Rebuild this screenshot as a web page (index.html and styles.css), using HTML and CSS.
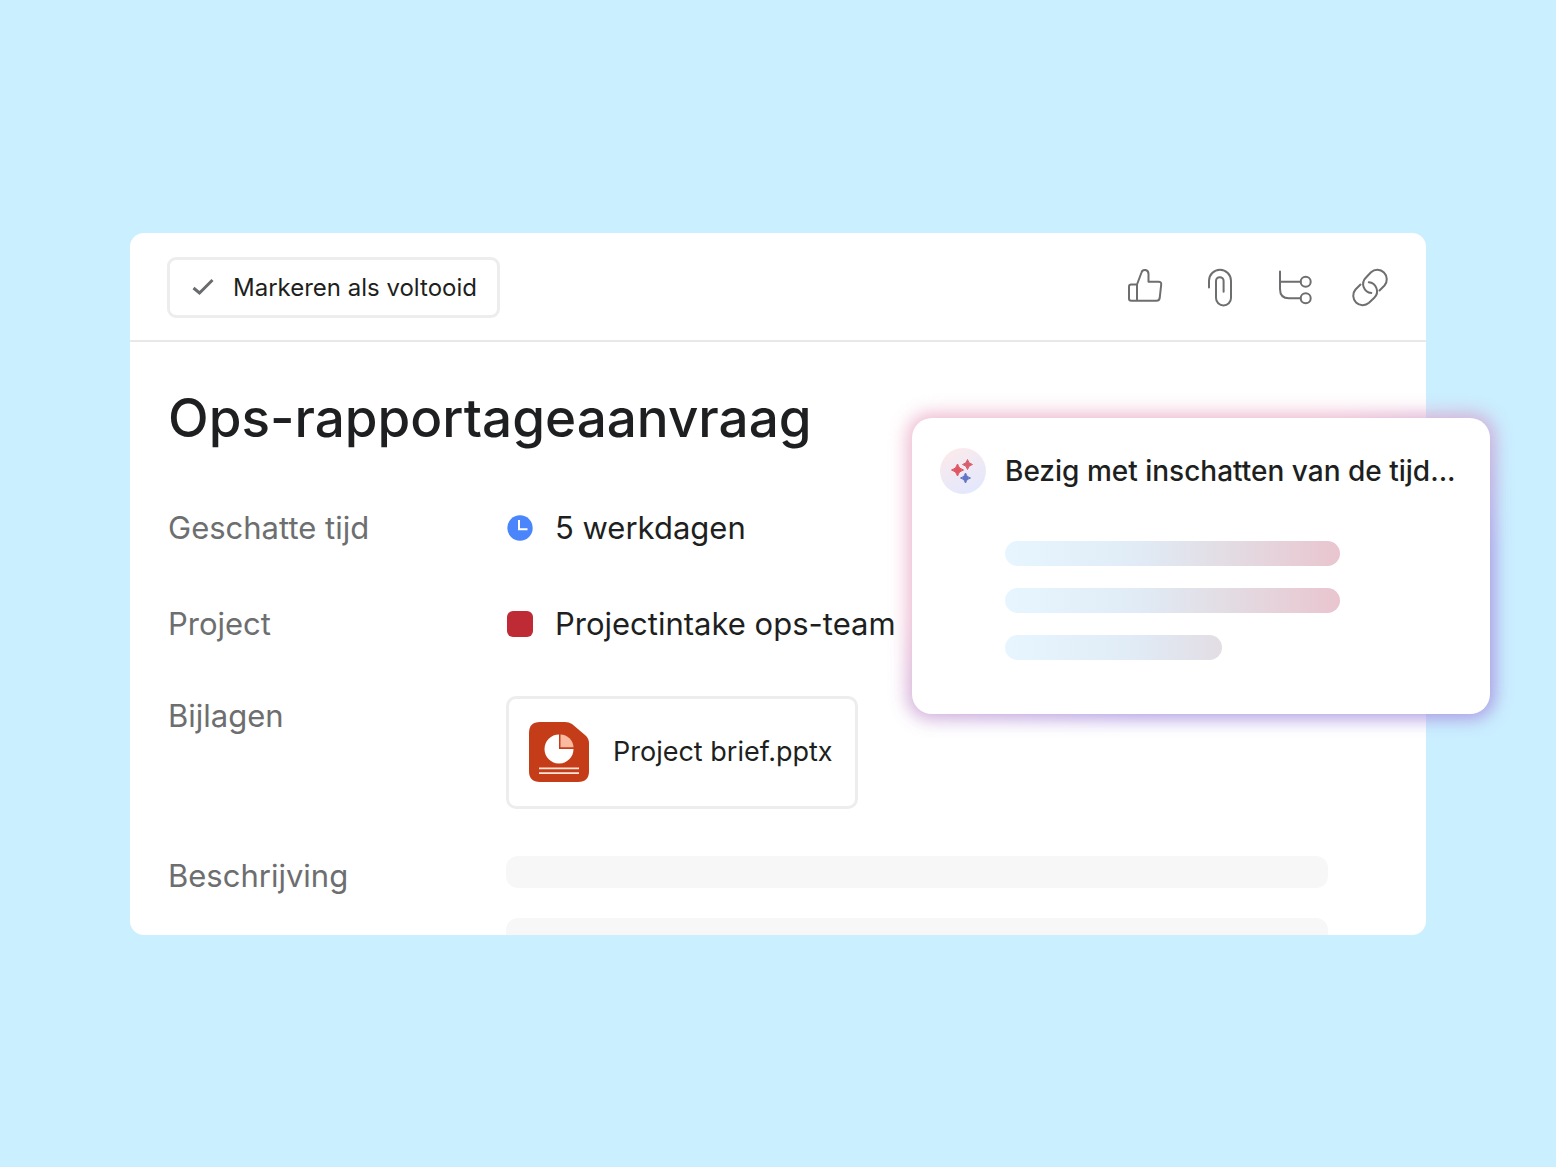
FILE: index.html
```html
<!DOCTYPE html>
<html lang="nl">
<head>
  <meta charset="UTF-8">
  <meta name="viewport" content="width=device-width, initial-scale=1.0">
  <title>Ops-rapportageaanvraag</title>
  <link rel="stylesheet" href="styles.css">
</head>
<body>
  <main class="stage">
    <section class="task">
      <header class="toolbar">
        <button type="button" class="complete-button">
          <svg class="check" viewBox="0 0 24 24"><path d="M3.500 13l6 5L22.500 5"/></svg>
          Markeren als voltooid
        </button>
        <div class="actions">
          <button type="button" class="icon-button" aria-label="Vind ik leuk">
            <svg viewBox="0 0 40 40">
              <path d="M12 17.500L16.500 5.500C17.500 1.800 23.500 2 23.500 7V14.700H33.500Q36.500 14.700 36.200 17.700L34.700 31Q34.300 33.700 31.500 33.700H6.200Q4 33.700 4 31.500V19.700Q4 17.500 6.200 17.500H12V33.700"/>
            </svg>
          </button>
          <button type="button" class="icon-button" aria-label="Bijlage toevoegen">
            <svg viewBox="0 0 40 40">
              <path d="M9 20.500V13.800A11 11 0 0 1 31 13.800V31A7.500 7.500 0 0 1 16 31V14A3.800 3.800 0 0 1 23.600 14V24.700"/>
            </svg>
          </button>
          <button type="button" class="icon-button" aria-label="Subtaken">
            <svg viewBox="0 0 40 40">
              <path d="M5 4.500V22Q5 31.300 14 31.300H25.500M5 14.800H25.500"/>
              <circle cx="30.700" cy="14.800" r="5"/>
              <circle cx="30.700" cy="31.300" r="5"/>
            </svg>
          </button>
          <button type="button" class="icon-button" aria-label="Link kopiëren">
            <svg viewBox="0 0 40 40">
              <path d="M29.500 23.500L34.500 18.500A9.500 9.500 0 0 0 21 5.200L15.800 10.700A9 9 0 0 0 21.300 26"/>
              <path d="M10.500 17.500L5.500 22.500A9.500 9.500 0 0 0 19 35.800L24.300 30.700A9 9 0 0 0 18.800 15.300"/>
            </svg>
          </button>
        </div>
      </header>

      <div class="content">
        <h1>Ops-rapportageaanvraag</h1>
        <dl class="fields">
          <div class="field">
            <dt>Geschatte tijd</dt>
            <dd class="value">
              <svg class="marker" viewBox="0 0 26 26">
                <circle cx="13" cy="13" r="12.700" fill="#4a85fb"/>
                <path d="M12 5V14.300H20.500" fill="none" stroke="#fff" stroke-width="2"/>
              </svg>
              5 werkdagen
            </dd>
          </div>
          <div class="field">
            <dt>Project</dt>
            <dd class="value"><span class="marker project-color"></span>Projectintake ops-team</dd>
          </div>
          <div class="field field-top">
            <dt>Bijlagen</dt>
            <dd>
              <a href="#" class="attachment">
                <svg class="file-icon" viewBox="0 0 60 60">
                  <path d="M11 0H36Q40 0 43 2L56 13Q60 16.500 60 21V49Q60 60 49 60H11Q0 60 0 49V11Q0 0 11 0Z" fill="#c43d18"/>
                  <path d="M30 12.500A14.500 14.500 0 1 0 44.500 27H30Z" fill="#fff"/>
                  <path d="M31.500 12.500A13.500 13.500 0 0 1 44.500 25.200H31.500Z" fill="#fbb9a0"/>
                  <path d="M10 46.300H50M10 51.200H50" stroke="#ffe4d8" stroke-width="1.800"/>
                </svg>
                Project brief.pptx
              </a>
            </dd>
          </div>
          <div class="field field-top">
            <dt>Beschrijving</dt>
            <dd class="description">
              <span class="text-line"></span>
              <span class="text-line"></span>
            </dd>
          </div>
        </dl>
      </div>
    </section>

    <aside class="ai-card">
      <div class="ai-panel">
        <svg class="ai-icon" viewBox="0 0 46 46">
          <defs>
            <linearGradient id="badge" x1="0" y1="0" x2="0.500" y2="1">
              <stop offset="0.200" stop-color="#f9eaed"/>
              <stop offset="1" stop-color="#e4e8fc"/>
            </linearGradient>
          </defs>
          <circle cx="23" cy="23" r="23" fill="url(#badge)"/>
          <path d="M17.500 16Q18.500 21 23.500 22Q18.500 23 17.500 28Q16.500 23 11.500 22Q16.500 21 17.500 16Z" fill="#e05562" stroke="#e05562"/>
          <path d="M27.500 11.500Q28.300 15.700 32.500 16.500Q28.300 17.300 27.500 21.500Q26.700 17.300 22.500 16.500Q26.700 15.700 27.500 11.500Z" fill="#d95d6c" stroke="#d95d6c"/>
          <path d="M25.500 25Q26.300 29.200 30.500 30Q26.300 30.800 25.500 35Q24.700 30.800 20.500 30Q24.700 29.200 25.500 25Z" fill="#6274c6" stroke="#6274c6"/>
        </svg>
        <p class="ai-title">Bezig met inschatten van de tijd...</p>
        <div class="ai-lines">
          <span class="ai-line"></span>
          <span class="ai-line"></span>
          <span class="ai-line ai-line-short"></span>
        </div>
      </div>
    </aside>
  </main>
</body>
</html>
```
FILE: styles.css
```css
* {
  box-sizing: border-box;
}

body {
  margin: 0;
  min-height: 100vh;
  display: flex;
  align-items: center;
  padding: 0 130px;
  background-color: #caefff;
  color: #1e1f21;
  font-family: Inter, "Liberation Sans", sans-serif;
}

button {
  font-family: inherit;
  color: inherit;
  cursor: pointer;
}

.stage {
  position: relative;
  flex: 1;
}

.task {
  background-color: #fff;
  border-radius: 14px;
  overflow: hidden;
}

/* Toolbar */
.toolbar {
  display: flex;
  align-items: center;
  justify-content: space-between;
  padding: 24px 36px 22px 37px;
  border-bottom: 2px solid #e8e8e9;
}

.complete-button {
  display: flex;
  align-items: center;
  gap: 19px;
  height: 61px;
  padding: 0 20px;
  background-color: #fff;
  border: 3px solid #ededee;
  border-radius: 9px;
  font-size: 24px;
}

.check {
  width: 24px;
  height: 24px;
  fill: none;
  stroke: #6a6b6d;
  stroke-width: 3;
}

.actions {
  display: flex;
  gap: 35px;
}

.icon-button {
  padding: 0;
  border: none;
  background: none;
}

.icon-button svg {
  display: block;
  width: 40px;
  height: 40px;
  fill: none;
  stroke: #6d6e6f;
  stroke-width: 2;
  stroke-linecap: round;
  stroke-linejoin: round;
}

/* Task details */
.content {
  padding: 44px 98px 0 38px;
}

h1 {
  margin: 0 0 54px;
  font-size: 53px;
  font-weight: 500;
  line-height: 64px;
}

.fields {
  display: flex;
  flex-direction: column;
  gap: 47px;
  margin: 0;
  font-size: 31px;
  line-height: 40px;
}

.field {
  display: grid;
  grid-template-columns: 338px 1fr;
  align-items: center;
  min-height: 49px;
}

.field-top {
  align-items: start;
}

dt {
  color: #6d6e6f;
}

dd {
  margin: 0;
}

.value {
  display: flex;
  align-items: center;
  gap: 22px;
  padding-left: 1px;
}

.marker {
  width: 26px;
  height: 26px;
}

.project-color {
  border-radius: 6px;
  background-color: #bf2b35;
}

.attachment {
  display: inline-flex;
  align-items: center;
  gap: 24px;
  height: 113px;
  padding: 0 22px 0 20px;
  border: 3px solid #ededee;
  border-radius: 10px;
  color: inherit;
  font-size: 27px;
  text-decoration: none;
  vertical-align: top;
}

.file-icon {
  width: 60px;
  height: 60px;
}

.description {
  display: flex;
  flex-direction: column;
  gap: 30px;
  max-height: 79px;
  overflow: hidden;
}

.text-line {
  flex: none;
  height: 32px;
  border-radius: 12px;
  background-color: #f7f7f7;
}

/* AI estimate card */
.ai-card {
  position: absolute;
  top: 185px;
  right: -64px;
  z-index: 1;
  width: 578px;
}

.ai-card::before {
  content: "";
  position: absolute;
  inset: -5px;
  z-index: -1;
  border-radius: 24px;
  background: linear-gradient(155deg, #ecb3cb 35%, #a892e0 70%);
  filter: blur(9px);
  opacity: 0.9;
}

.ai-panel {
  display: grid;
  grid-template-columns: 46px 1fr;
  column-gap: 19px;
  row-gap: 47px;
  align-items: center;
  padding: 30px 26px 54px 28px;
  border-radius: 20px;
  background-color: #fff;
}

.ai-icon {
  width: 46px;
  height: 46px;
}

.ai-title {
  margin: 0;
  font-size: 28px;
  font-weight: 500;
  line-height: 40px;
  white-space: nowrap;
}

.ai-lines {
  grid-column: 2;
  display: flex;
  flex-direction: column;
  gap: 22px;
}

.ai-line {
  width: 335px;
  height: 25px;
  border-radius: 13px;
  background: linear-gradient(90deg, #e7f6fe, #e0ebf6 40%, #e3dde4 65%, #e9c5cf);
}

.ai-line-short {
  width: 217px;
  background: linear-gradient(90deg, #e7f6fe, #e0ebf6 60%, #e3dde4);
}
```
